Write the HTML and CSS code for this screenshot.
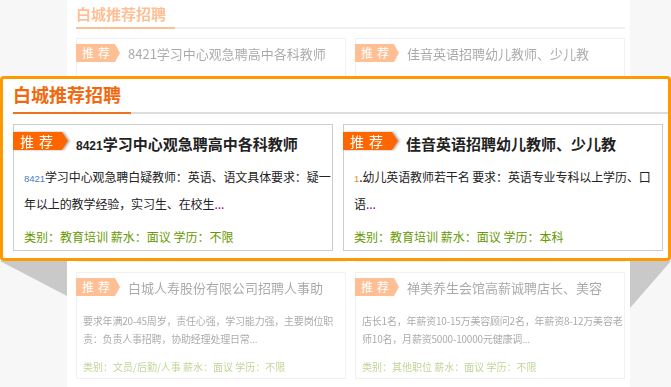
FILE: index.html
```html
<!DOCTYPE html>
<html lang="zh-CN">
<head>
  <meta charset="UTF-8" />
  <meta name="viewport" content="width=device-width, initial-scale=1.0" />
  <title>白城推荐招聘</title>
  <link rel="stylesheet" href="styles.css">
</head>
<body>

  <div class="page">
    <div class="side"></div>
    <div class="main">
      <div class="bg-content">
        <div class="bg-head"><span>白城推荐招聘</span></div>
        <div class="bg-grid">
          <div class="bg-card">
            <div class="bg-card-head"><span class="bg-tag">推荐</span><span class="bg-name">8421学习中心观急聘高中各科教师</span></div>
          </div>
          <div class="bg-card">
            <div class="bg-card-head"><span class="bg-tag">推荐</span><span class="bg-name">佳音英语招聘幼儿教师、少儿教</span></div>
          </div>
          <div class="bg-card"></div>
          <div class="bg-card"></div>
          <div class="bg-card">
            <div class="bg-card-head"><span class="bg-tag">推荐</span><span class="bg-name">白城人寿股份有限公司招聘人事助</span></div>
            <p class="bg-desc">要求年满20-45周岁，责任心强，学习能力强，主要岗位职责：负责人事招聘，协助经理处理日常...</p>
            <p class="bg-meta">类别：文员/后勤/人事 薪水：面议 学历：不限</p>
          </div>
          <div class="bg-card">
            <div class="bg-card-head"><span class="bg-tag">推荐</span><span class="bg-name">禅美养生会馆高薪诚聘店长、美容</span></div>
            <p class="bg-desc">店长1名，年薪资10-15万美容顾问2名，年薪资8-12万美容老师10名，月薪资5000-10000元健康调...</p>
            <p class="bg-meta">类别：其他职位 薪水：面议 学历：不限</p>
          </div>
        </div>
      </div>
    </div>
    <div class="side"></div>
  </div>

  <div class="corner corner-left"></div>
  <div class="corner corner-right"></div>

  <div class="zoom-panel">
    <div class="zoom-head"><span>白城推荐招聘</span></div>
    <div class="zoom-grid">
      <div class="job-card">
        <div class="job-head">
          <span class="tag-wrap"><span class="tag">推荐</span></span>
          <span class="job-name"><span class="num">8421</span>学习中心观急聘高中各科教师</span>
        </div>
        <p class="job-desc"><span class="num blue">8421</span>学习中心观急聘白疑教师：英语、语文具体要求：疑一年以上的教学经验，实习生、在校生<span class="more">...</span></p>
        <p class="job-meta">类别：教育培训 薪水：面议 学历：不限</p>
      </div>
      <div class="job-card">
        <div class="job-head">
          <span class="tag-wrap"><span class="tag">推荐</span></span>
          <span class="job-name">佳音英语招聘幼儿教师、少儿教</span>
        </div>
        <p class="job-desc"><span class="num orange">1</span>.幼儿英语教师若干名 要求：英语专业专科以上学历、口语<span class="more">...</span></p>
        <p class="job-meta">类别：教育培训 薪水：面议 学历：本科</p>
      </div>
    </div>
  </div>

</body>
</html>
```

FILE: styles.css
```css
* {
  box-sizing: border-box;
}
body {
  margin: 0;
  width: 671px;
  height: 387px;
  overflow: hidden;
  position: relative;
  font-family: "Noto Sans CJK SC", "Liberation Sans", sans-serif;
  color: #333;
}
p {
  margin: 0;
}
.num {
  font-family: "Liberation Sans", sans-serif;
  font-size: 0.8em;
}

/* faded page behind the magnifier */
.page {
  display: flex;
  height: 387px;
}
.side {
  width: 67px;
  background-color: #f7f7f7;
}
.side:last-child {
  flex: 1;
}
.main {
  width: 563px;
  background-color: #fff;
}
.bg-content {
  padding: 0 5px 0 9px;
  opacity: 0.42;
  filter: blur(0.6px);
}
.bg-head {
  height: 29px;
  line-height: 27px;
  border-bottom: 2px solid #ddd;
  font-size: 15px;
  font-weight: bold;
  color: #f60;
}
.bg-head span {
  display: inline-block;
  width: 99px;
  border-bottom: 2px solid #f60;
}
.bg-grid {
  margin-top: 9px;
  display: grid;
  grid-template-columns: 270px 270px;
  grid-auto-rows: 107px;
  gap: 10px 9px;
}
.bg-card {
  border: 1px solid #ddd;
  padding: 0 0 0 6px;
}
.bg-card-head {
  display: flex;
  align-items: center;
  margin: 5px 0 0 -7px;
  height: 18px;
}
.bg-tag {
  width: 44px;
  height: 18px;
  line-height: 18px;
  padding-left: 6px;
  background-color: #f60;
  color: #fff;
  font-size: 12px;
  letter-spacing: 4px;
  clip-path: polygon(0 0, 39px 0, 44px 50%, 39px 100%, 0 100%);
}
.bg-name {
  margin-left: 8px;
  font-size: 13px;
  color: #333;
  white-space: nowrap;
}
.bg-desc {
  margin-top: 16px;
  height: 36px;
  font-size: 10px;
  line-height: 18px;
  letter-spacing: -0.2px;
  color: #333;
}
.bg-meta {
  margin-top: 10px;
  font-size: 10px;
  line-height: 18px;
  color: #690;
}

/* perspective corners */
.corner {
  position: absolute;
  top: 261px;
  background-color: #c9c9c9;
}
.corner-left {
  left: 0;
  width: 67px;
  height: 35px;
  clip-path: polygon(0 0, 100% 0, 100% 100%);
}
.corner-right {
  left: 630px;
  width: 41px;
  height: 47px;
  clip-path: polygon(0 0, 100% 0, 0 100%);
}

/* magnified block */
.zoom-panel {
  position: absolute;
  left: 0;
  top: 76px;
  width: 671px;
  height: 185px;
  border: 3px solid #f90;
  border-radius: 4px;
  background-color: #fff;
  padding: 0 0 0 10px;
}
.zoom-head {
  height: 35px;
  line-height: 31px;
  border-bottom: 2px solid #ddd;
  font-size: 18px;
  font-weight: bold;
  color: #f0690f;
}
.zoom-head span {
  display: inline-block;
  width: 118px;
  border-bottom: 2px solid #f07020;
  margin-bottom: -2px;
  height: 35px;
}
.zoom-grid {
  margin-top: 10px;
  display: grid;
  grid-template-columns: 320px 320px;
  gap: 10px;
}
.job-card {
  height: 127px;
  border: 1px solid #ccc;
  padding: 0 0 0 10px;
}
.job-head {
  display: flex;
  align-items: center;
  height: 18px;
  margin: 7px 0 0 -11px;
}
.tag-wrap {
  filter: drop-shadow(2px 0 1px rgba(0, 0, 0, 0.3));
}
.tag {
  display: block;
  width: 55px;
  height: 18px;
  line-height: 18px;
  padding-left: 7px;
  background-color: #f60;
  color: #fff;
  font-size: 14px;
  letter-spacing: 5px;
  clip-path: polygon(0 0, 49px 0, 55px 50%, 49px 100%, 0 100%);
}
.job-name {
  margin: 4px 0 0 8px;
  font-size: 15px;
  font-weight: bold;
  color: #222;
  white-space: nowrap;
}
.job-desc {
  margin-top: 14px;
  height: 50px;
  font-size: 12px;
  line-height: 25px;
  letter-spacing: -0.1px;
  color: #222;
}
.blue {
  color: #4a7fc8;
}
.orange {
  color: #e8883a;
}
.more {
  color: #909;
}
.job-meta {
  margin-top: 10px;
  font-size: 12px;
  line-height: 25px;
  color: #690;
}
```
